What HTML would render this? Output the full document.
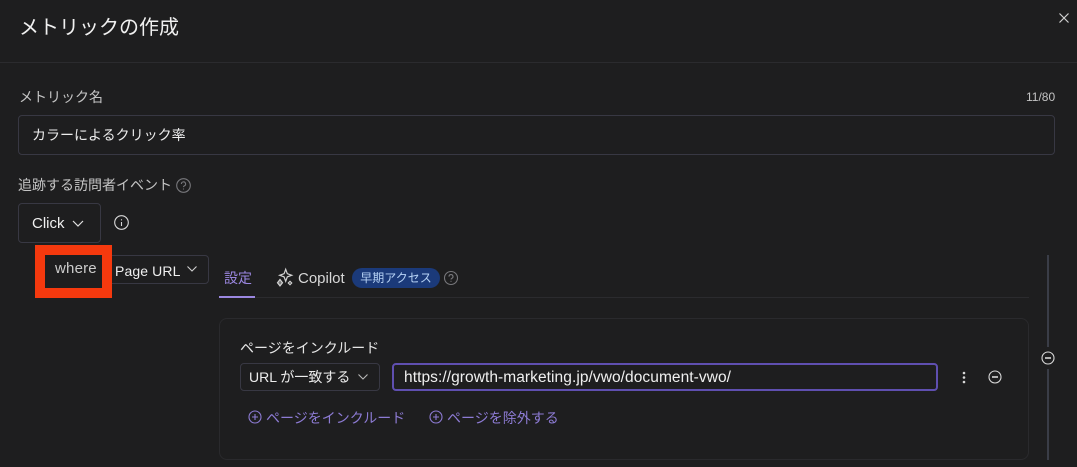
<!DOCTYPE html>
<html><head><meta charset="utf-8"><style>
html,body{margin:0;padding:0;background:#1e1e1f;width:1077px;height:467px;overflow:hidden}
body{font-family:"Liberation Sans","Noto Sans CJK JP",sans-serif;position:relative;color:#e6e6e6}
.a{position:absolute;white-space:nowrap}
.b{position:absolute;box-sizing:border-box;border:1px solid #383843}
svg{position:absolute;overflow:visible;fill:none}
</style></head><body>
<div class="a" style="left:19px;top:14px;font-size:20px;line-height:28px;color:#f0f0f0">メトリックの作成</div>
<svg style="left:1059px;top:13px" width="10" height="10" stroke="#d0d0d0" stroke-width="1.2"><path d="M0.5 .5L9.500 9.500M9.500 .5L.5 9.500"/></svg>
<div class="b" style="left:0;top:62px;width:1077px;height:1px;border:0;background:#2b2b2e"></div>
<div class="a" style="left:19px;top:87px;font-size:14px;line-height:20px;color:#c4c4c4">メトリック名</div>
<div class="a" style="left:1026px;top:89px;font-size:12px;line-height:16px;color:#c4c4c4">11/80</div>
<div class="b" style="left:18px;top:115px;width:1037px;height:40px;border-radius:4px"></div>
<div class="a" style="left:32px;top:125px;font-size:14px;line-height:20px;color:#ececec">カラーによるクリック率</div>
<div class="a" style="left:18px;top:175px;font-size:14px;line-height:20px;color:#c4c4c4">追跡する訪問者イベント</div>
<svg style="left:175.500px;top:177.500px" width="15" height="15" stroke="#77777b" stroke-width="1.100"><circle cx="7.500" cy="7.500" r="6.800"/><path d="M5.400 6a2.100 2.100 0 1 1 3.100 1.800c-.6.3-1 .7-1 1.300"/><path d="M7.500 10.500v1"/></svg>
<div class="b" style="left:18px;top:203px;width:83px;height:40px;border-radius:4px"></div>
<div class="a" style="left:32px;top:215px;font-size:15px;line-height:18px;color:#f0f0f0">Click</div>
<svg style="left:72px;top:220px" width="12" height="7" stroke="#e0e0e0" stroke-width="1.200"><path d="M1 1l5 5 5-5"/></svg>
<svg style="left:114px;top:215px" width="15" height="15" stroke="#d8d8d8" stroke-width="1.100"><circle cx="7.500" cy="7.500" r="6.800"/><path d="M7.500 7v4M7.500 4.200v1.200"/></svg>
<div class="b" style="left:100px;top:255px;width:109px;height:29px;border-radius:4px"></div>
<div class="a" style="left:115px;top:262px;font-size:14px;line-height:18px;letter-spacing:.12px;color:#f0f0f0">Page URL</div>
<svg style="left:187px;top:266px" width="10" height="6" stroke="#d0d0d0" stroke-width="1.100"><path d="M.5 .5L5 5 9.500 .5"/></svg>
<div class="b" style="left:35px;top:245px;width:77px;height:53px;border:10px solid #f5390e;background:#1e1e1f"></div>
<div class="a" style="left:55px;top:260px;font-size:15px;line-height:18px;letter-spacing:.2px;color:#cccccc">where</div>
<div class="a" style="left:224px;top:268px;font-size:14px;line-height:20px;color:#9b87e0">設定</div>
<div class="b" style="left:219px;top:296px;width:36px;height:2px;border:0;background:#9b87e0"></div>
<div class="b" style="left:255px;top:297px;width:774px;height:1px;border:0;background:#2b2b2e"></div>
<svg style="left:276px;top:268px" width="17" height="19" stroke="#d4d4d4" stroke-width="1.200"><path d="M9.700 1.300l1.600 4.400 4.400 1.600-4.400 1.600-1.600 4.400-1.600-4.400-4.400-1.600 4.400-1.600z"/><path d="M4 11.500l2.500 3.200-2.500 3.200-2.500-3.200z" fill="#d4d4d4" fill-opacity=".5"/><path d="M14 13.300l1.700 1.700-1.700 1.700-1.700-1.700z"/></svg>
<div class="a" style="left:298px;top:270px;font-size:15px;line-height:18px;color:#d8d8d8">Copilot</div>
<div class="a" style="left:352px;top:268px;width:88px;height:20px;border-radius:10px;background:#1b3a7a;color:#b6d2f5;font-size:12px;line-height:20px;text-align:center">早期アクセス</div>
<svg style="left:444px;top:271px" width="14" height="14" stroke="#77777b" stroke-width="1.100"><circle cx="7" cy="7" r="6.500"/><path d="M5 5.600a2 2 0 1 1 3 1.700c-.6.3-1 .7-1 1.200"/><path d="M7 9.800v1"/></svg>
<div class="b" style="left:219px;top:318px;width:810px;height:142px;border:1px solid #2a2a2d;border-radius:8px"></div>
<div class="a" style="left:240px;top:338px;font-size:14px;line-height:20px;color:#e6e6e6">ページをインクルード</div>
<div class="b" style="left:240px;top:363px;width:140px;height:28px;border-radius:4px"></div>
<div class="a" style="left:249px;top:368px;font-size:14px;line-height:18px;color:#ececec">URL が一致する</div>
<svg style="left:358px;top:374px" width="10" height="6" stroke="#b8b8b8" stroke-width="1.100"><path d="M.5 .5L5 5 9.500 .5"/></svg>
<div class="b" style="left:392px;top:363px;width:546px;height:28px;border:2px solid #5f4fb0;border-radius:4px"></div>
<div class="a" style="left:404px;top:369px;font-size:15.500px;line-height:18px;letter-spacing:.07px;color:#f0f0f0">https://growth-marketing.jp/vwo/document-vwo/</div>
<svg style="left:962px;top:371px" width="4" height="13"><circle cx="2" cy="2" r="1.300" fill="#d8d8d8"/><circle cx="2" cy="6.500" r="1.300" fill="#d8d8d8"/><circle cx="2" cy="11" r="1.300" fill="#d8d8d8"/></svg>
<svg style="left:988px;top:370px" width="14" height="14" stroke="#d8d8d8" stroke-width="1.100"><circle cx="7" cy="7" r="6"/><path d="M4 7h6" stroke-width="1.600"/></svg>
<svg style="left:248px;top:410px" width="14" height="14" stroke="#8d7bd4" stroke-width="1.100"><circle cx="7" cy="7" r="6"/><path d="M4 7h6M7 4v6"/></svg>
<div class="a" style="left:266px;top:408px;font-size:14px;line-height:20px;color:#8d7bd4">ページをインクルード</div>
<svg style="left:429px;top:410px" width="14" height="14" stroke="#8d7bd4" stroke-width="1.100"><circle cx="7" cy="7" r="6"/><path d="M4 7h6M7 4v6"/></svg>
<div class="a" style="left:447px;top:408px;font-size:14px;line-height:20px;color:#8d7bd4">ページを除外する</div>
<div class="b" style="left:1047px;top:255px;width:2px;height:92px;border:0;background:#3a3d47"></div>
<div class="b" style="left:1047px;top:369px;width:2px;height:91px;border:0;background:#3a3d47"></div>
<svg style="left:1041px;top:351px" width="14" height="14" stroke="#d8d8d8" stroke-width="1.100"><circle cx="7" cy="7" r="6"/><path d="M4 7h6" stroke-width="1.600"/></svg>
</body></html>
